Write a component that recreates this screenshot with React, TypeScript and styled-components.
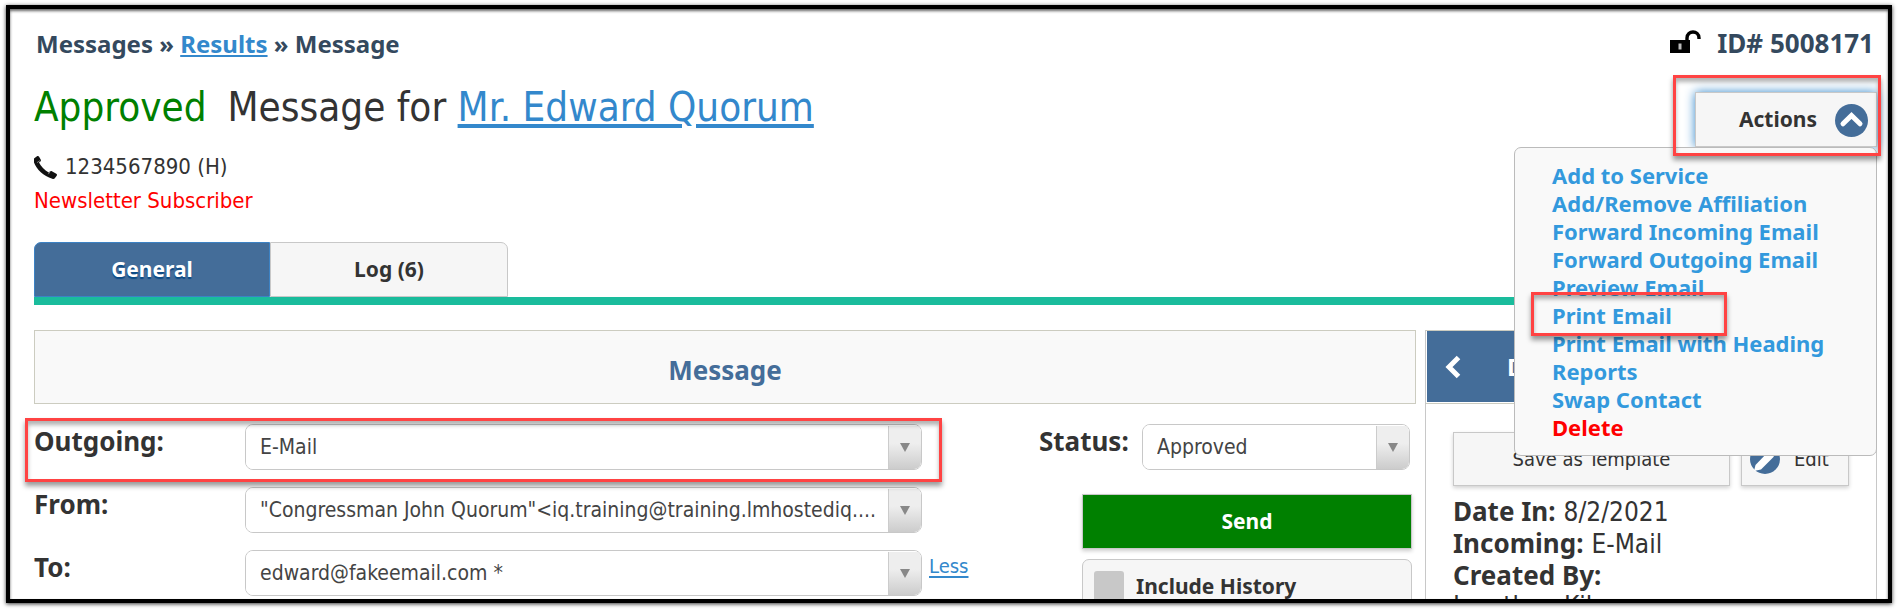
import React from "react";
import styled, { createGlobalStyle, css } from "styled-components";

const regular = `"DejaVu Sans Condensed", "DejaVu Sans", sans-serif`;
const strong = `"Noto Sans", "DejaVu Sans Condensed", sans-serif`;
const blue = "#446d99";
const link = "#3388cc";
const line = "#c8c8c8";

const bold = css`
  font-family: ${strong};
  font-weight: 700;
`;

const GlobalStyle = createGlobalStyle`
  *, *::before, *::after { box-sizing: border-box; }
  body { margin: 0; background: #fff; color: #333; font: 22px/34px ${regular}; overflow: hidden; }
  h1, h2, dl, dd, dt, ul, p { margin: 0; padding: 0; }
  a { color: ${link}; }
  button, select, input { font: inherit; color: inherit; margin: 0; }
`;

const Page = styled.div`
  height: 100vh;
  padding: 5px 6px 9px;
`;

const Frame = styled.div`
  height: 100%;
  overflow: hidden;
  padding: 18px 11px 0 24px;
  border: 4px solid #000;
  box-shadow: 0 1px 4px rgba(0, 0, 0, 0.8), inset 0 2px 3px rgba(0, 0, 0, 0.6);
`;

const TopBar = styled.div`
  display: flex;
  justify-content: space-between;
  align-items: baseline;
  height: 33px;
  padding: 0 3px 0 2px;
  line-height: 32px;
  color: #34495e;
  ${bold}
`;

const Crumbs = styled.nav`
  font-size: 24px;
  white-space: pre;
`;

const RecordId = styled.div`
  display: flex;
  align-items: baseline;
  gap: 16px;
  font-size: 26px;
`;

const Head = styled.header`
  display: flex;
  justify-content: space-between;
  align-items: flex-start;
`;

const Summary = styled.div`
  padding-top: 23px;
`;

const Title = styled.h1`
  margin-bottom: 19px;
  font-size: 40px;
  line-height: 48px;
  font-weight: 400;
  a { text-underline-offset: 3px; text-decoration-thickness: 4px; }
`;

const Approved = styled.span`
  margin-right: 21px;
  color: #008000;
`;

const Phone = styled.p`
  display: flex;
  align-items: center;
  gap: 8px;
`;

const Subscriber = styled.p`
  color: #f00;
`;

const ActionsArea = styled.div`
  position: relative;
  z-index: 2;
  flex: none;
  margin-top: 32px;
`;

const ActionsButton = styled.button`
  display: flex;
  align-items: center;
  justify-content: flex-end;
  gap: 18px;
  width: 182px;
  height: 55px;
  padding: 0 8px 2px;
  border: 1px solid ${line};
  background: #f6f6f6;
  box-shadow: 0 0 10px #3388cc;
  ${bold}
  font-size: 21px;
  svg { position: relative; top: 2px; }
`;

const Menu = styled.ul`
  position: absolute;
  top: 100%;
  right: 0;
  width: 363px;
  height: 309px;
  padding: 13px 37px;
  list-style: none;
  border: 1px solid #bbb;
  border-radius: 7px;
  background: #f9f9f9;
`;

const MenuItem = styled.li`
  line-height: 28px;
  white-space: nowrap;
`;

const MenuLink = styled.a<{ $danger?: boolean }>`
  position: relative;
  display: inline-block;
  vertical-align: top;
  text-decoration: none;
  font-size: 22px;
  ${bold}
  color: ${(p) => (p.$danger ? "#f00" : "#3399dd")};
`;

const Highlight = styled.span<{ $inset: string }>`
  position: absolute;
  inset: ${(p) => p.$inset};
  z-index: 3;
  border: 3px solid #ff4343;
  box-shadow: 0 4px 5px rgba(0, 0, 0, 0.4), inset 0 4px 4px rgba(0, 0, 0, 0.3);
  pointer-events: none;
`;

const Tabs = styled.div`
  display: flex;
  margin-top: 24px;
  border-bottom: 8px solid #1abc9c;
`;

const Tab = styled.button<{ $active?: boolean }>`
  width: ${(p) => (p.$active ? 236 : 238)}px;
  height: 55px;
  padding: 0 0 2px;
  border: 1px solid ${line};
  border-radius: 0 7px 0 0;
  background: #f6f6f6;
  ${bold}
  font-size: 21px;
  ${(p) =>
    p.$active &&
    css`
      border: 1px solid #3c82c4;
      border-radius: 7px 0 0 0;
      background: ${blue};
      color: #fff;
      text-shadow: 0 2px 1px #0a4a85;
    `}
`;

const Columns = styled.div`
  display: flex;
  gap: 9px;
  margin-top: 25px;
`;

const Main = styled.main`
  flex: 1;
  min-width: 0;
`;

const SectionTitle = styled.h2`
  height: 74px;
  border: 1px solid #ccccc0;
  background: #f9f9f9;
  color: ${blue};
  text-align: center;
  ${bold}
  font-size: 26px;
  line-height: 78px;
`;

const Form = styled.form`
  display: flex;
  gap: 70px;
  padding: 20px 4px 0 0;
`;

const Recipients = styled.div`
  flex: 1;
  display: grid;
  grid-template-columns: 1fr 40px;
  gap: 17px 7px;
  align-content: start;
`;

const Field = styled.div`
  position: relative;
  grid-column: 1;
  display: flex;
`;

const FieldLabel = styled.label<{ $width: number }>`
  flex: none;
  width: ${(p) => p.$width}px;
  ${bold}
  font-size: 26px;
  line-height: 34px;
`;

const SelectBox = styled.div`
  flex: 1;
  min-width: 0;
  display: grid;
  height: 46px;
  border: 1px solid ${line};
  border-radius: 8px;
  overflow: hidden;
`;

const Select = styled.select`
  grid-area: 1 / 1;
  width: 100%;
  padding: 0 40px 0 14px;
  border: 0;
  appearance: none;
  background: #fff;
  color: #444;
  font-size: 21px;
`;

const Arrow = styled.span`
  grid-area: 1 / 1;
  z-index: 1;
  justify-self: end;
  display: grid;
  place-items: center;
  width: 33px;
  margin-top: 1px;
  border-left: 1px solid #ccc;
  background: linear-gradient(#eee 40%, #ccc);
  pointer-events: none;
`;

const LessLink = styled.a`
  grid-column: 2;
  font-size: 20px;
  line-height: 32px;
  text-underline-offset: 3px;
  text-decoration-thickness: 2px;
`;

const Side = styled.div`
  flex: none;
  width: 373px;
  display: flex;
  flex-direction: column;
  align-items: flex-end;
`;

const StatusField = styled(Field)`
  width: 100%;
  padding-right: 2px;
`;

const Send = styled.button`
  width: 330px;
  height: 55px;
  margin: 24px 0 10px;
  padding: 0 0 2px;
  border: 1px solid ${line};
  background: #008000;
  box-shadow: 0 2px 4px rgba(0, 0, 0, 0.2);
  color: #fff;
  ${bold}
  font-size: 21px;
`;

const History = styled.label`
  display: flex;
  align-items: center;
  gap: 12px;
  width: 330px;
  height: 54px;
  padding: 0 11px;
  border: 1px solid ${line};
  border-radius: 7px;
  background: #f6f6f6;
  ${bold}
  font-size: 21px;
`;

const Check = styled.input`
  appearance: none;
  width: 30px;
  height: 30px;
  border-radius: 3px;
  background: #c8c8c8;
`;

const Aside = styled.aside`
  flex: none;
  width: 452px;
  height: 400px;
  border: solid ${line};
  border-width: 0 1px;
`;

const AsideTitle = styled.div`
  height: 74px;
  padding: 0 0 1px 1px;
  border: solid #ccccc0;
  border-width: 1px 0;
`;

const AsideBar = styled.div`
  display: flex;
  align-items: center;
  gap: 46px;
  height: 100%;
  padding-left: 18px;
  background: ${blue};
  color: #fff;
  ${bold}
  font-size: 24px;
`;

const IconButton = styled.button`
  display: flex;
  padding: 0;
  border: 0;
  background: none;
`;

const Tools = styled.div`
  display: flex;
  gap: 11px;
  padding: 28px 27px 10px;
`;

const Tool = styled.button<{ $width: number; $icon?: boolean }>`
  display: flex;
  align-items: center;
  justify-content: ${(p) => (p.$icon ? "flex-start" : "center")};
  gap: 14px;
  width: ${(p) => p.$width}px;
  height: 54px;
  padding: 0 8px;
  border: 1px solid ${line};
  background: #f6f6f6;
  box-shadow: 0 2px 4px rgba(0, 0, 0, 0.18);
  font-size: 20px;
`;

const Details = styled.dl`
  padding-left: 27px;
  font-size: 26px;
  line-height: 31px;
  dt { ${bold} }
`;

const Detail = styled.div<{ $stacked?: boolean }>`
  display: flex;
  flex-direction: ${(p) => (p.$stacked ? "column" : "row")};
  align-items: baseline;
  column-gap: 8px;
`;

const LockIcon = () => (
  <svg width="31" height="23" viewBox="0 0 31 23" aria-hidden="true">
    <path d="M0 10h20v13H0z" fill="#000" />
    <path d="M17 11V8C17 4 20 2 23 2s6 2 6 6v1" fill="none" stroke="#000" strokeWidth="3.4" />
    <path d="M8.500 13.500h3v6h-3z" fill="#bbb" />
  </svg>
);

const PhoneIcon = () => (
  <svg width="23" height="23" viewBox="0 0 23 23" aria-hidden="true">
    <path d="M0 2.500 3 .3c.8-.5 1.600-.3 2.100.4l1.700 3c.3.700.2 1.300-.4 1.800L5 6.600c1.800 3.800 5.500 7.500 9.700 9.900l1.500-1.200c.5-.5 1.100-.5 1.700-.1l4.400 2.600c.8.500.9 1.100.4 1.900l-1.700 2.400c-.6.800-1.500 1.100-2.700.7C9.500 20 2.500 13.500 0 6.500z" fill="#111" />
    <path d="M6.200 4.500 3 6.600M16.300 15.300l-2 2.900" stroke="#999" strokeWidth=".8" />
  </svg>
);

const UpIcon = () => (
  <svg width="33" height="33" viewBox="0 0 33 33" aria-hidden="true">
    <circle cx="16.500" cy="16.500" r="16.500" fill={blue} />
    <path d="m8 19.800 8.500-8.300 8.500 8.300" fill="none" stroke="#fff" strokeWidth="5" strokeLinecap="round" />
  </svg>
);

const BackIcon = () => (
  <svg width="16" height="24" viewBox="0 0 16 24" aria-hidden="true">
    <path d="M13.500 2.500 4 12l9.500 9.500" fill="none" stroke="#fff" strokeWidth="5" />
  </svg>
);

const PencilIcon = () => (
  <svg width="30" height="30" viewBox="0 0 30 30" aria-hidden="true">
    <circle cx="15" cy="15" r="15" fill={blue} />
    <path d="M4 27l1.500-6L18 8l6 4.500L11 25.500z" fill="#fff" />
  </svg>
);

type SelectFieldProps = { id: string; value: string };

const SelectField = ({ id, value }: SelectFieldProps) => (
  <SelectBox>
    <Select id={id} defaultValue={value}>
      <option>{value}</option>
    </Select>
    <Arrow>
      <svg width="10" height="9" viewBox="0 0 10 9" aria-hidden="true">
        <path d="M0 0h10L5 9z" fill="#888" />
      </svg>
    </Arrow>
  </SelectBox>
);

const actions = [
  "Add to Service",
  "Add/Remove Affiliation",
  "Forward Incoming Email",
  "Forward Outgoing Email",
  "Preview Email",
  "Print Email",
  "Print Email with Heading",
  "Reports",
  "Swap Contact",
  "Delete",
];

export default function App() {
  return (
    <Page>
      <GlobalStyle />
      <Frame>
        <TopBar>
          <Crumbs>
            Messages » <a href="#results">Results</a> » Message
          </Crumbs>
          <RecordId>
            <LockIcon />
            ID# 5008171
          </RecordId>
        </TopBar>
        <Head>
          <Summary>
            <Title>
              <Approved>Approved</Approved>Message for <a href="#contact">Mr. Edward Quorum</a>
            </Title>
            <Phone>
              <PhoneIcon />
              1234567890 (H)
            </Phone>
            <Subscriber>Newsletter Subscriber</Subscriber>
          </Summary>
          <ActionsArea>
            <ActionsButton type="button" aria-expanded="true">
              Actions
              <UpIcon />
            </ActionsButton>
            <Menu>
              {actions.map((name) => (
                <MenuItem key={name}>
                  <MenuLink href="#action" $danger={name === "Delete"}>
                    {name}
                    {name === "Print Email" && <Highlight $inset="-9px -55px -7px -21px" />}
                  </MenuLink>
                </MenuItem>
              ))}
            </Menu>
            <Highlight $inset="-17px -4px -9px -22px" />
          </ActionsArea>
        </Head>
        <Tabs>
          <Tab type="button" $active>General</Tab>
          <Tab type="button">Log (6)</Tab>
        </Tabs>
        <Columns>
          <Main>
            <SectionTitle>Message</SectionTitle>
            <Form>
              <Recipients>
                <Field>
                  <FieldLabel htmlFor="outgoing" $width={211}>Outgoing:</FieldLabel>
                  <SelectField id="outgoing" value="E-Mail" />
                  <Highlight $inset="-6px -20px -12px -9px" />
                </Field>
                <Field>
                  <FieldLabel htmlFor="from" $width={211}>From:</FieldLabel>
                  <SelectField id="from" value={'"Congressman John Quorum"<iq.training@training.lmhostediq....'} />
                </Field>
                <Field>
                  <FieldLabel htmlFor="to" $width={211}>To:</FieldLabel>
                  <SelectField id="to" value="edward@fakeemail.com *" />
                </Field>
                <LessLink href="#less">Less</LessLink>
              </Recipients>
              <Side>
                <StatusField>
                  <FieldLabel htmlFor="status" $width={103}>Status:</FieldLabel>
                  <SelectField id="status" value="Approved" />
                </StatusField>
                <Send type="button">Send</Send>
                <History>
                  <Check type="checkbox" />
                  Include History
                </History>
              </Side>
            </Form>
          </Main>
          <Aside>
            <AsideTitle>
              <AsideBar>
                <IconButton type="button" aria-label="Back">
                  <BackIcon />
                </IconButton>
                Details
              </AsideBar>
            </AsideTitle>
            <Tools>
              <Tool type="button" $width={277}>Save as Template</Tool>
              <Tool type="button" $width={108} $icon>
                <PencilIcon />
                Edit
              </Tool>
            </Tools>
            <Details>
              <Detail>
                <dt>Date In:</dt>
                <dd>8/2/2021</dd>
              </Detail>
              <Detail>
                <dt>Incoming:</dt>
                <dd>E-Mail</dd>
              </Detail>
              <Detail $stacked>
                <dt>Created By:</dt>
                <dd>Jonathan Kil</dd>
              </Detail>
            </Details>
          </Aside>
        </Columns>
      </Frame>
    </Page>
  );
}
